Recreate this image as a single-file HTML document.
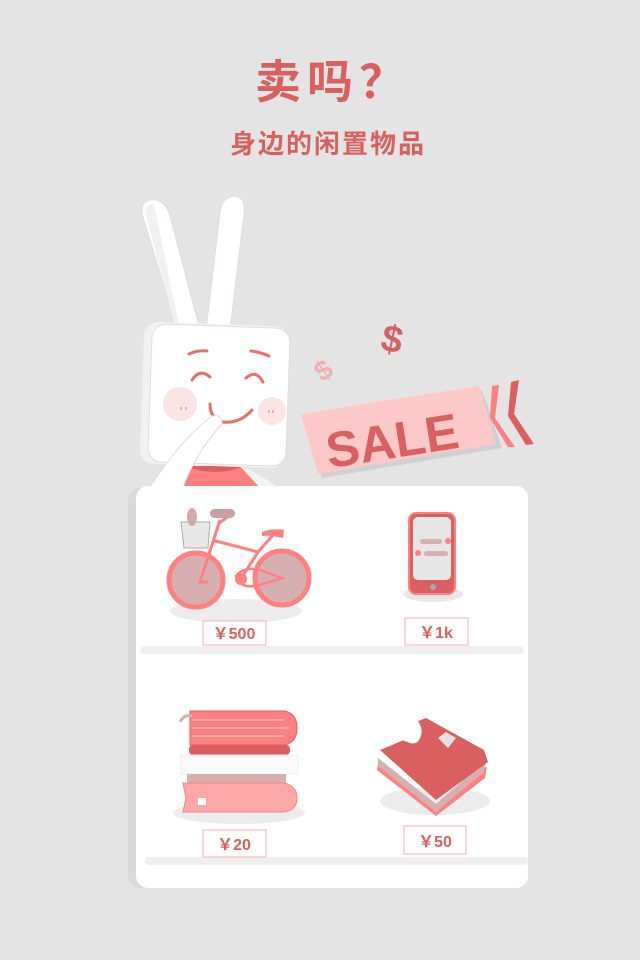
<!DOCTYPE html>
<html><head><meta charset="utf-8"><style>
html,body{margin:0;padding:0;background:#e4e4e4;width:640px;height:960px;overflow:hidden}
svg{display:block}
</style></head><body>
<svg width="640" height="960" viewBox="0 0 640 960" xmlns="http://www.w3.org/2000/svg">
<rect width="640" height="960" fill="#e4e4e4"/>
<text x="333" y="98" text-anchor="middle" font-family="'Noto Sans CJK SC',sans-serif" font-weight="bold" font-size="46" letter-spacing="6" fill="#d9605e">卖吗？</text>
<text x="328" y="153" text-anchor="middle" font-family="'Noto Sans CJK SC',sans-serif" font-weight="bold" font-size="26" letter-spacing="2" fill="#d9605e">身边的闲置物品</text>

<!-- bunny ears -->
<path d="M142,214 Q140,198 156,200 Q166,202 170,216 L200,330 L178,332 Z" fill="#fff" stroke="#ecd8d8" stroke-width="1"/>
<path d="M146,214 Q146,204 154,204 L180,330 L176,330 Z" fill="#f1f1f1"/>
<path d="M220,212 Q222,196 236,196 Q246,198 244,214 L230,330 L206,330 Z" fill="#fff" stroke="#ecd8d8" stroke-width="1"/>
<!-- torso -->
<path d="M180,466 L240,466 L262,490 L158,490 Z" fill="#ff8080"/>
<path d="M185,466 Q215,478 245,466 Z" fill="#d9605e"/>
<!-- head -->
<rect x="142" y="324" width="145" height="142" rx="14" fill="#f2f2f2" transform="rotate(2 215 395)"/>
<rect x="150" y="326" width="138" height="138" rx="14" fill="#fff" stroke="#ecd8d8" stroke-width="1" transform="rotate(2 215 395)"/>
<circle cx="180" cy="404" r="17" fill="#fde4e4"/>
<circle cx="272" cy="411" r="14" fill="#fde4e4"/>
<g stroke="#e8706c" stroke-width="3" fill="none" stroke-linecap="round">
<path d="M189,354 Q198,350 207,351"/>
<path d="M251,351 Q260,352 269,356"/>
<path d="M192,380 Q200,368 210,377"/>
<path d="M246,378 Q256,369 263,382"/>
<path d="M210,404 Q210,418 222,422 Q240,424 252,410"/>
</g>
<g stroke="#e8a0a0" stroke-width="1.5"><path d="M181,407v3M186,407v3M269,410v3M273,410v3"/></g>
<!-- arm -->
<path d="M148,490 Q180,440 212,416 Q222,414 222,424 Q196,452 182,490 Z" fill="#fff" stroke="#e8d8d8" stroke-width="1"/>
<path d="M240,466 Q262,474 280,490 L262,490 Z" fill="#f4f4f4"/>

<!-- dollars -->
<text x="392" y="352" text-anchor="middle" font-family="'Liberation Sans',sans-serif" font-weight="bold" font-size="38" fill="#d9605e" transform="rotate(12 392 340)">$</text>
<text x="323" y="380" text-anchor="middle" font-family="'Liberation Sans',sans-serif" font-weight="bold" font-size="28" fill="#f0b0b0" transform="rotate(-35 323 370)">$</text>
<!-- sale -->
<path d="M305,420 L482,390 L502,448 L322,478 Z" fill="#d0d0d0"/>
<path d="M301,414 L479,386 L496,444 L318,474 Z" fill="#fdc8c8"/>
<text x="392" y="458" text-anchor="middle" font-family="'Liberation Sans',sans-serif" font-weight="bold" font-size="50" fill="#d9605e" transform="rotate(-9 392 440)">SALE</text>
<path d="M492,386 L499,385 L495,418 L515,447 L508,447 L490,418 Z" fill="#ff8080"/>
<path d="M511,382 L519,380 L514,414 L534,444 L526,445 L508,416 Z" fill="#d9605e"/>

<!-- card -->
<rect x="128" y="488" width="398" height="400" rx="12" fill="#d9d9d9"/>
<rect x="136" y="486" width="392" height="402" rx="12" fill="#fff"/>
<rect x="140" y="646" width="384" height="8" rx="4" fill="#efefef"/>
<rect x="145" y="857" width="383" height="8" rx="4" fill="#efefef"/>

<!-- bike -->
<ellipse cx="236" cy="611" rx="66" ry="12" fill="#ececec"/>
<g fill="none" stroke="#ff8080" stroke-width="3">
<circle cx="196" cy="580" r="27" fill="#d6b0b0" stroke-width="5"/>
<circle cx="282" cy="578" r="27" fill="#d6b0b0" stroke-width="5"/>
<path d="M220,520 L200,582 L208,582 M212,540 L258,552 L240,580 M258,552 L274,534 M218,524 L230,515"/>
<path d="M282,578 L260,570 Q244,566 236,576 Q240,590 260,585 Z" stroke-width="2.5"/>
</g>
<circle cx="241" cy="579" r="6" fill="#ff8080"/>
<path d="M262,532 Q272,528 284,530 L283,538 Q270,535 262,536 Z" fill="#ff8080"/>
<rect x="210" y="509" width="25" height="9" rx="4.5" fill="#c8a0a0"/>
<path d="M181,522 L210,522 L208,548 L184,548 Z" fill="#e8e8e8" stroke="#b8a8a8" stroke-width="1"/>
<ellipse cx="192" cy="517" rx="5" ry="9" fill="#d4a8a8"/>
<rect x="203" y="621" width="63" height="24" fill="#fff" stroke="#f0b0b0"/>
<text x="234" y="639" text-anchor="middle" font-family="'Liberation Sans','Noto Sans CJK SC',sans-serif" font-weight="bold" font-size="16" fill="#d9605e">￥500</text>

<!-- phone -->
<ellipse cx="433" cy="594" rx="30" ry="8" fill="#e8e8e8"/>
<rect x="409" y="513" width="46" height="81" rx="7" fill="#d9605e" stroke="#ff8080" stroke-width="2"/>
<rect x="413" y="517" width="38" height="63" rx="5" fill="#e6e6e6"/>
<rect x="420" y="539" width="22" height="5" rx="2.5" fill="#d6b0b0"/><circle cx="448" cy="541" r="3" fill="#ff8080"/>
<rect x="424" y="551" width="24" height="5" rx="2.5" fill="#d6b0b0"/><circle cx="418" cy="553" r="3" fill="#ff8080"/>
<circle cx="433" cy="587" r="3" fill="#aaa"/>
<rect x="405" y="618" width="63" height="27" fill="#fff" stroke="#f0b0b0"/>
<text x="436" y="638" text-anchor="middle" font-family="'Liberation Sans','Noto Sans CJK SC',sans-serif" font-weight="bold" font-size="16" fill="#d9605e">￥1k</text>

<!-- books -->
<ellipse cx="239" cy="813" rx="66" ry="11" fill="#ececec"/>
<path d="M190,711 L285,711 Q297,714 297,728 Q297,742 285,745 L190,745 Z" fill="#ff8080" stroke="#d9605e" stroke-width="1"/>
<g stroke="#ffd0d0" stroke-width="1"><path d="M192,720h92M192,728h96M192,736h92"/></g>
<path d="M180,722 Q184,714 192,716" stroke="#d6b0b0" stroke-width="3" fill="none"/>
<rect x="189" y="745" width="101" height="10" rx="4" fill="#d9605e"/>
<rect x="181" y="755" width="117" height="19" fill="#fafafa" stroke="#eee"/>
<rect x="187" y="774" width="99" height="9" fill="#d6b0b0"/>
<path d="M183,783 L284,783 Q297,786 297,798 Q297,810 284,812 L183,812 L186,798 Z" fill="#ffa8a8" stroke="#ff8080" stroke-width="1"/>
<rect x="198" y="798" width="8" height="7" fill="#fff"/>
<rect x="203" y="830" width="63" height="27" fill="#fff" stroke="#f0b0b0"/>
<text x="234" y="850" text-anchor="middle" font-family="'Liberation Sans','Noto Sans CJK SC',sans-serif" font-weight="bold" font-size="16" fill="#d9605e">￥20</text>

<!-- shirt -->
<ellipse cx="435" cy="801" rx="55" ry="14" fill="#ececec"/>
<path d="M378,763 L436,810 L487,766 L485,778 L436,816 L377,770 Z" fill="#ff8080"/>
<path d="M378,758 L436,804 L486,760 L484,772 L436,812 L378,766 Z" fill="#d6b0b0"/>
<path d="M380,750 L404,740 Q416,748 420,738 Q424,730 418,721 L426,718 L484,750 L488,762 L436,800 Z" fill="#d9605e"/>
<path d="M404,740 Q418,744 420,732 L418,723" stroke="#fff" stroke-width="2" fill="none"/>
<path d="M438,738 L446,732 L456,738 L448,748 Z" fill="#e8e0e0"/>
<rect x="404" y="826" width="62" height="28" fill="#fff" stroke="#f0b0b0"/>
<text x="435" y="847" text-anchor="middle" font-family="'Liberation Sans','Noto Sans CJK SC',sans-serif" font-weight="bold" font-size="16" fill="#d9605e">￥50</text>
</svg>
</body></html>
